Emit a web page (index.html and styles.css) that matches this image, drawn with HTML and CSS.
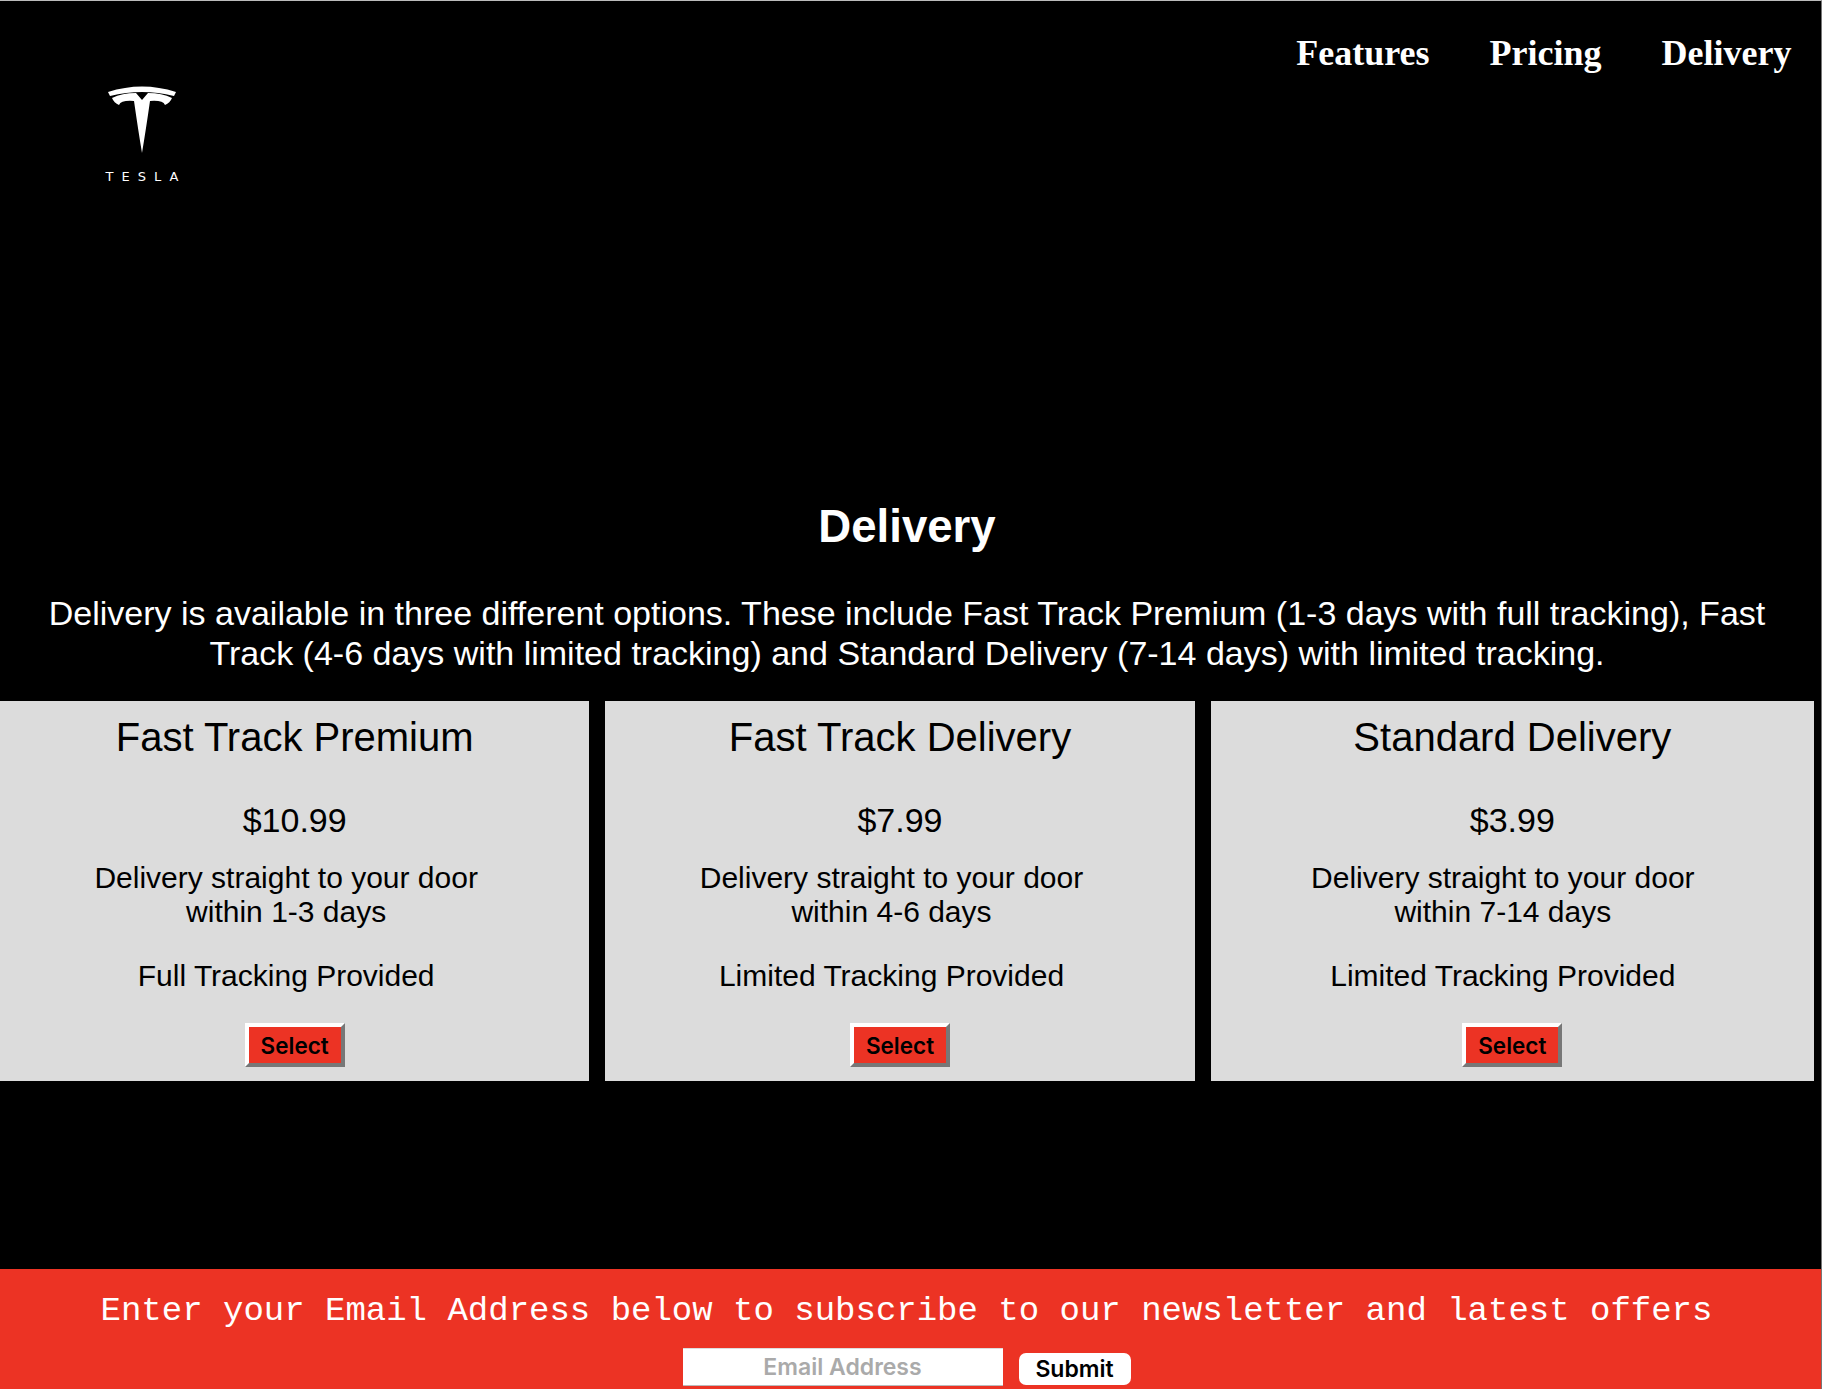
FILE: index.html
```html
<!DOCTYPE html>
<html lang="en">
<head>
  <meta charset="UTF-8">
  <title>Tesla Delivery</title>
  <link rel="stylesheet" href="styles.css">
</head>
<body>

  <header class="header">
    <div class="logo">
      <svg class="logo-mark" width="68" height="68" viewBox="0 0 68 68">
        <path class="logo-arc" d="M0 7 Q34 -4 68 7 L66 11 Q34 3 2 11 Z"/>
        <path class="logo-t" d="M4 13 Q14 8 28 8 L34 15 L40 8 Q54 8 64 13 Q62 18 57 20 Q55 15 42 16 Q38 44 34 68 Q30 44 26 16 Q13 15 11 20 Q6 18 4 13 Z"/>
      </svg>
      <span class="logo-word">TESLA</span>
    </div>
    <nav class="nav">
      <a href="#">Features</a>
      <a href="#">Pricing</a>
      <a href="#">Delivery</a>
    </nav>
  </header>

  <section class="intro">
    <h1>Delivery</h1>
    <p>Delivery is available in three different options. These include Fast Track Premium (1-3 days with full tracking), Fast Track (4-6 days with limited tracking) and Standard Delivery (7-14 days) with limited tracking.</p>
  </section>

  <section class="cards">
    <div class="card">
      <h2>Fast Track Premium</h2>
      <div class="price">$10.99</div>
      <p class="desc">Delivery straight to your door<br>within 1-3 days</p>
      <p class="desc">Full Tracking Provided</p>
      <button class="select">Select</button>
    </div>
    <div class="card">
      <h2>Fast Track Delivery</h2>
      <div class="price">$7.99</div>
      <p class="desc">Delivery straight to your door<br>within 4-6 days</p>
      <p class="desc">Limited Tracking Provided</p>
      <button class="select">Select</button>
    </div>
    <div class="card card-wide">
      <h2>Standard Delivery</h2>
      <div class="price">$3.99</div>
      <p class="desc">Delivery straight to your door<br>within 7-14 days</p>
      <p class="desc">Limited Tracking Provided</p>
      <button class="select">Select</button>
    </div>
  </section>

  <footer class="footer">
    <p>Enter your Email Address below to subscribe to our newsletter and latest offers</p>
    <form class="signup">
      <input type="email" placeholder="Email Address">
      <button type="button">Submit</button>
    </form>
  </footer>

</body>
</html>
```

FILE: styles.css
```css
html, body {
  margin: 0;
  height: 1389px;
  overflow: hidden;
}
body {
  display: flex;
  flex-direction: column;
  background: black;
  color: white;
  font-family: "Liberation Sans", Arial, sans-serif;
  border-top: 1px solid #bbb;
  border-right: 1px solid #777;
  box-sizing: border-box;
}
.header {
  display: flex;
  justify-content: space-between;
  align-items: flex-start;
  height: 480px;
}
.logo {
  display: flex;
  flex-direction: column;
  align-items: center;
  margin-left: 105px;
  margin-top: 84px;
  width: 74px;
}
.logo-mark {
  display: block;
  filter: blur(0.4px);
}
.logo-arc, .logo-t {
  fill: white;
}
.logo-word {
  font-family: "DejaVu Sans", sans-serif;
  font-size: 13px;
  letter-spacing: 8px;
  margin-top: 16px;
  margin-right: -8px;
  line-height: 16px;
  white-space: nowrap;
}
.nav {
  display: flex;
  gap: 60px;
  margin-right: 29.5px;
  margin-top: 31px;
}
.nav a {
  color: white;
  text-decoration: none;
  font-family: "Liberation Serif", "Times New Roman", serif;
  font-weight: bold;
  font-size: 36px;
}
.intro {
  text-align: center;
  padding: 0 27px 0 20px;
  height: 220px;
}
.intro h1 {
  font-size: 45.6px;
  margin: 20px 0 0;
  line-height: 52px;
}
.intro p {
  font-size: 34px;
  line-height: 40px;
  margin: 40px 0 0;
}
.cards {
  display: flex;
  gap: 16px;
  height: 380px;
  padding-right: 7px;
}
.card {
  flex: 1 1 589px;
  background: #dcdcdc;
  color: black;
  text-align: center;
}
.card-wide {
  flex-basis: 603px;
}
.card h2 {
  font-size: 40px;
  font-weight: normal;
  line-height: 46px;
  margin: 13px 0 0;
}
.price {
  font-size: 34px;
  line-height: 40px;
  margin-top: 40px;
}
.desc {
  font-size: 30px;
  line-height: 34px;
  margin: 21px 17px 0 0;
}
.desc + .desc {
  margin-top: 30px;
}
.card-wide .desc {
  margin-right: 19px;
}
.select {
  display: block;
  box-sizing: border-box;
  width: 100px;
  height: 44px;
  margin: 30px auto 0;
  padding: 0;
  background: #ec3324;
  color: black;
  font-family: "Inter", "Liberation Sans", sans-serif;
  font-weight: 600;
  font-size: 22.5px;
  border: 4px solid;
  border-color: white #777 #777 white;
}
.footer {
  margin-top: auto;
  height: 120px;
  background: #ec3324;
  text-align: center;
  margin-right: -1px;
  padding-right: 9px;
}
.footer p {
  font-family: "Liberation Mono", "Courier New", monospace;
  font-size: 34px;
  line-height: 40px;
  margin: 22px 0 0;
}
.signup {
  display: flex;
  justify-content: center;
  align-items: flex-start;
  gap: 16px;
  margin-top: 17px;
}
.signup input {
  width: 320px;
  height: 38px;
  box-sizing: border-box;
  border: none;
  border-top: 1px solid #ddd;
  border-bottom: 1px solid #bbb;
  background: white;
  text-align: center;
  font-family: "Inter", "Liberation Sans", sans-serif;
  font-weight: 600;
  font-size: 23px;
  padding: 0;
}
.signup input::placeholder {
  color: #aaa;
}
.signup button {
  margin-top: 5px;
  width: 112px;
  height: 32px;
  padding: 0;
  border: none;
  border-radius: 7px;
  background: white;
  color: black;
  font-family: "Inter", "Liberation Sans", sans-serif;
  font-weight: 600;
  font-size: 23px;
}
```
